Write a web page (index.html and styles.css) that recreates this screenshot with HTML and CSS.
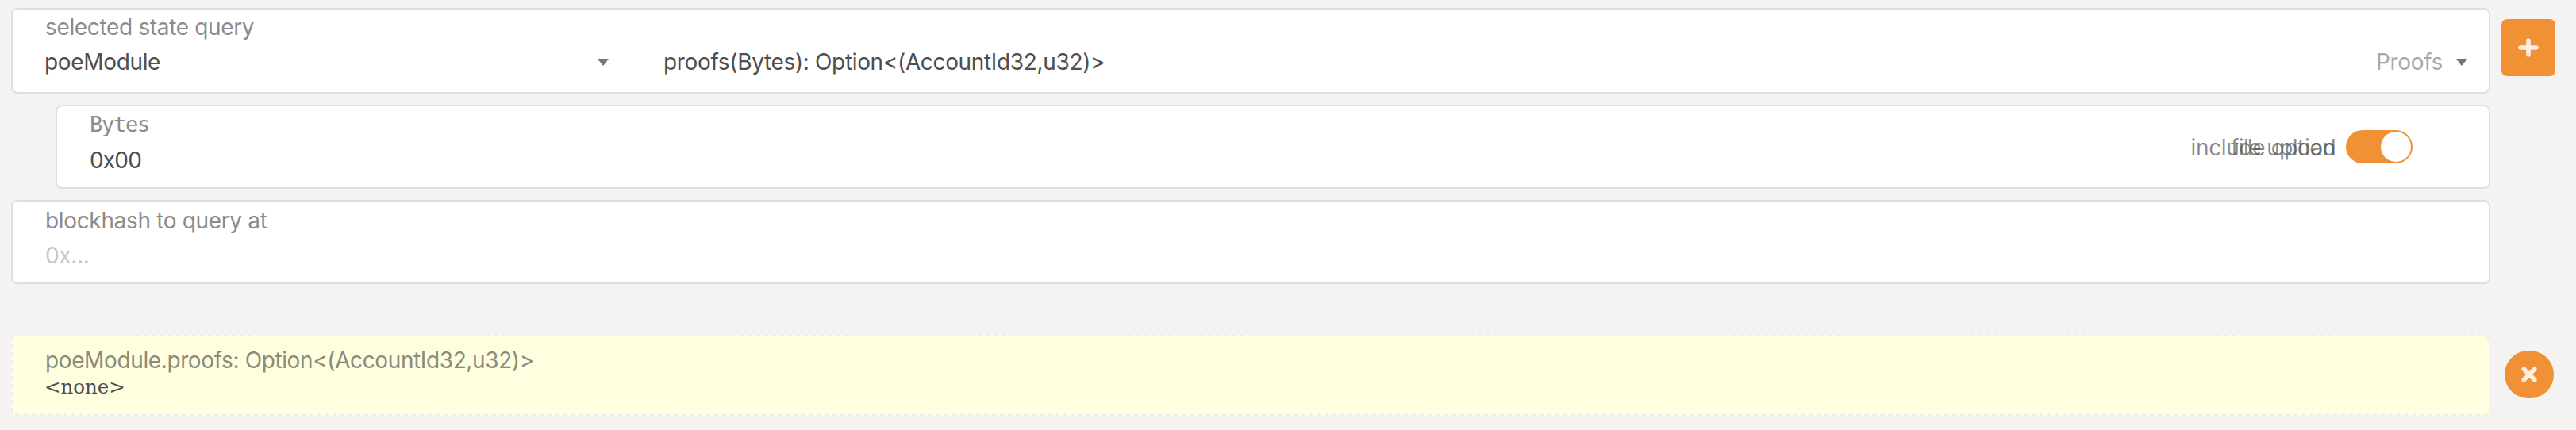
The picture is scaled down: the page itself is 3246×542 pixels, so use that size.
FILE: index.html
```html
<!DOCTYPE html>
<html lang="en">
<head>
<meta charset="utf-8">
<title>Chain state</title>
<link rel="stylesheet" href="styles.css">
</head>
<body>
<main class="page">
  <section class="row">
    <div class="fields">
      <div class="box query">
        <div class="label">selected state query</div>
        <div class="query-line">
          <div class="select module"><span class="value">poeModule</span><svg class="caret caret-left" viewBox="0 0 14 9"><path d="M0 0H14L8 8Q7 9 6 8Z"/></svg></div>
          <div class="select method"><span class="value signature">proofs(Bytes): Option&lt;(AccountId32,u32)&gt;</span><span class="value hint">Proofs</span><svg class="caret" viewBox="0 0 14 9"><path d="M0 0H14L8 8Q7 9 6 8Z"/></svg></div>
        </div>
      </div>
      <div class="box param">
        <div class="param-text">
          <div class="label type">Bytes</div>
          <div class="value bytes">0x00</div>
        </div>
        <div class="toggles">
          <span class="toggle-label">include option</span>
          <span class="toggle-label upload">file upload</span>
          <span class="switch"><span class="knob"></span></span>
        </div>
      </div>
      <div class="box hash">
        <div class="label">blockhash to query at</div>
        <div class="value placeholder">0x...</div>
      </div>
    </div>
    <button class="add" aria-label="Add"><svg class="plus" viewBox="0 0 26 24"><path d="M3 12H23M13 3V21"/></svg></button>
  </section>
  <section class="row result-row">
    <div class="result">
      <div class="label result-label">poeModule.proofs: Option&lt;(AccountId32,u32)&gt;</div>
      <div class="none">&lt;none&gt;</div>
    </div>
    <button class="remove" aria-label="Remove"><svg class="cross" viewBox="0 0 20 20"><path d="M3.2 3.2L16.8 16.8M16.8 3.2L3.2 16.8"/></svg></button>
  </section>
</main>
</body>
</html>
```
FILE: styles.css
```css
* { box-sizing: border-box; }
body {
  margin: 0;
  background: #f4f3f1;
  color: #4e4e4e;
  font-family: Inter, "Liberation Sans", sans-serif;
  font-size: 28px;
  letter-spacing: -0.34px;
  line-height: 44px;
}
.page { height: 542px; padding: 10px 26px 0 14px; }
.row { display: flex; align-items: flex-start; gap: 14px; }
.fields { width: 3124px; display: flex; flex-direction: column; gap: 14px; }
.box {
  background: #fff;
  border: 2px solid #dededf;
  border-radius: 8px;
  padding-left: 40px;
  height: 106px;
}
.label { color: #8b8b8b; padding-left: 1px; white-space: nowrap; }
.value { white-space: nowrap; }

.query { height: 108px; }
.query-line { display: flex; }
.select { display: flex; align-items: center; }
.module { width: 780px; justify-content: space-between; padding-right: 69px; }
.method { flex: 1; padding-right: 27px; }
.signature { flex: 1; }
.hint { color: #a9a9a9; margin-right: 17px; }
.caret { width: 14px; height: 9px; fill: #767676; }

.param { margin-left: 56px; display: flex; justify-content: space-between; padding-right: 96px; }
.type { font-family: "DejaVu Sans Mono", monospace; font-size: 27px; letter-spacing: -1.25px; height: 44px; padding-top: 1px; }
.bytes { padding: 2px 0 0 1px; letter-spacing: -0.8px; }
/* Both toggle captions share one grid cell, aligned to its right edge. */
.toggles {
  display: grid;
  grid-template-columns: auto 84px;
  column-gap: 13px;
  align-items: center;
  align-self: center;
}
.toggle-label { grid-area: 1 / 1; justify-self: end; padding-top: 2px; color: rgba(78, 78, 78, 0.66); }
.upload { letter-spacing: -0.6px; }
.switch {
  grid-area: 1 / 2;
  width: 84px;
  height: 42px;
  border-radius: 21px;
  background: #f19135;
  display: flex;
  justify-content: flex-end;
  align-items: center;
  padding-right: 2px;
}
.knob { width: 38px; height: 38px; border-radius: 50%; background: #fff; }

.hash { padding-top: 2px; }
.placeholder { color: #c6c6c6; padding-left: 1px; }

button { border: 0; padding: 0; background: #f19135; display: flex; align-items: center; justify-content: center; }
.add { width: 68px; height: 72px; margin-top: 14px; border-radius: 7px; }
.plus { width: 26px; height: 24px; }
.cross { width: 20px; height: 20px; }
.plus path, .cross path { stroke: #ffeedf; stroke-width: 5.6; stroke-linecap: round; fill: none; }

.result-row { margin-top: 64px; gap: 18px; }
.result {
  width: 3124px;
  height: 102px;
  padding: 14px 0 0 40px;
  border: 2px dashed #eeeeee;
  border-radius: 8px;
  background: #ffffdf;
}
.result-label { line-height: 32px; color: #8b8b7b; letter-spacing: -0.38px; }
.none { font-family: "DejaVu Serif", serif; font-size: 24.5px; letter-spacing: 0; line-height: 32px; padding-top: 2px; }
.remove { width: 62px; height: 60px; margin-top: 20px; border-radius: 30px; }
```
